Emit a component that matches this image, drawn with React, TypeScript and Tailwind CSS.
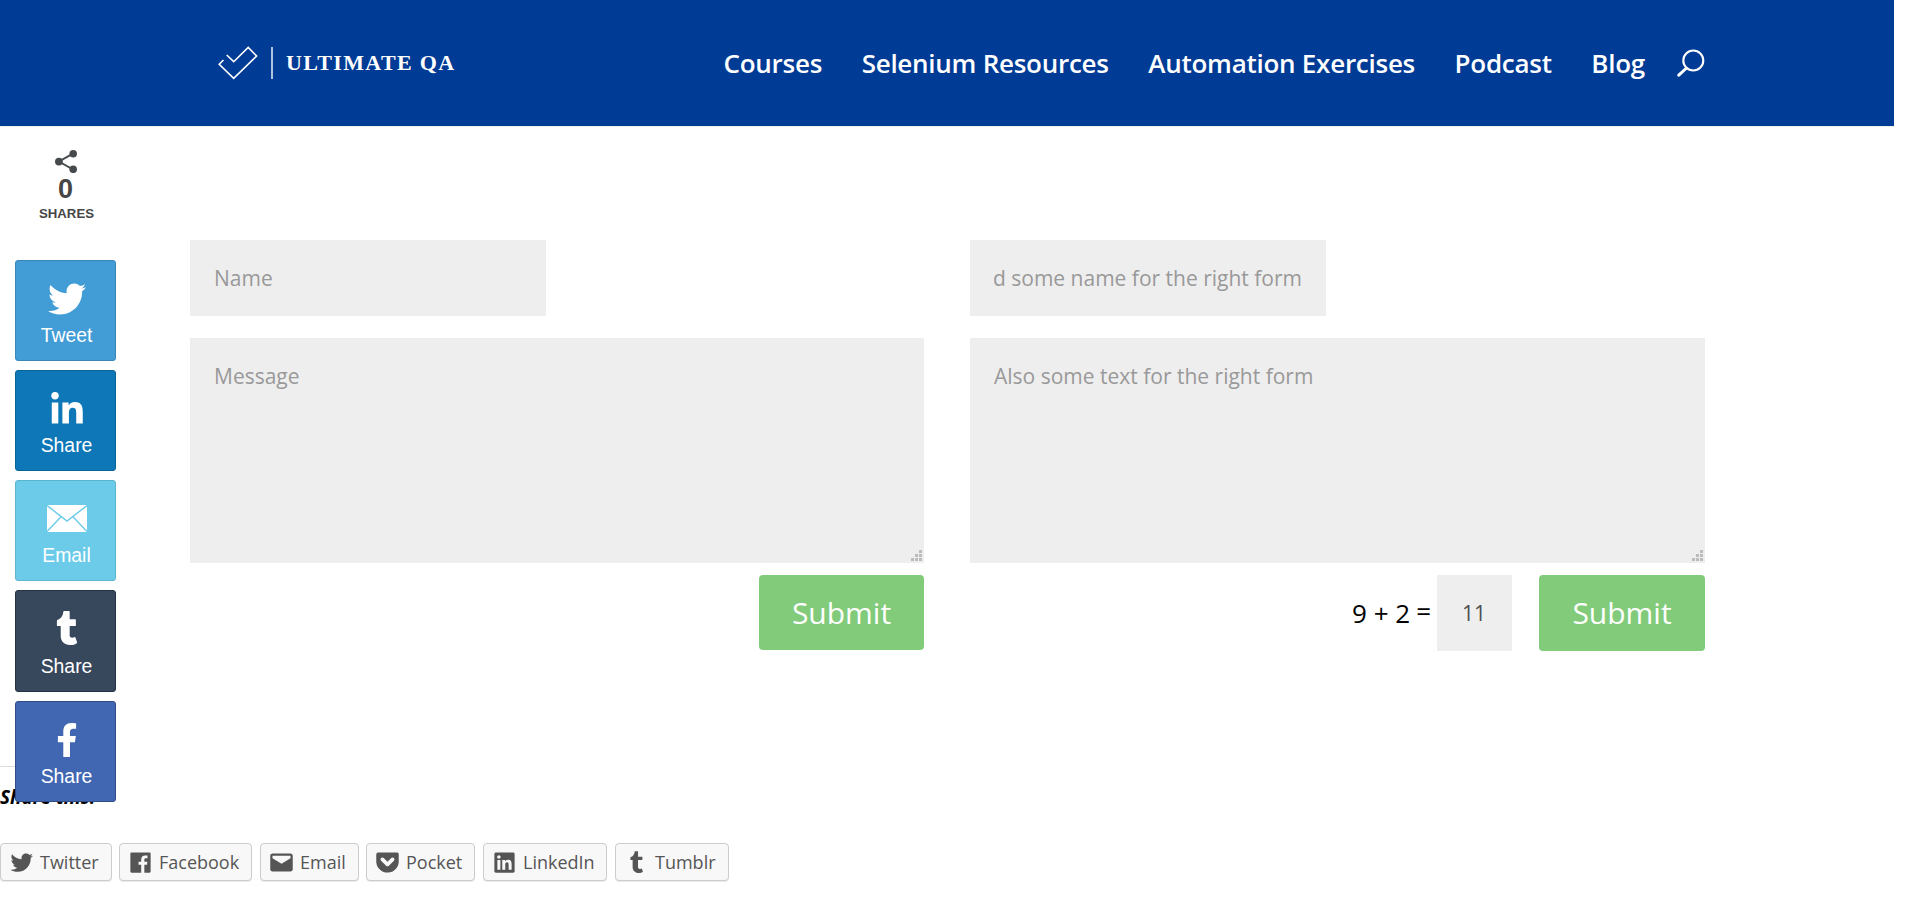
import React from "react";
import { FaTwitter, FaLinkedinIn, FaTumblr, FaFacebookF } from "react-icons/fa";

const navLinks = ["Courses", "Selenium Resources", "Automation Exercises", "Podcast", "Blog"];

const EnvelopeIcon = () => (
  <svg width="40" height="27" viewBox="0 0 40 27" className="block">
    <rect width="40" height="27" fill="#fff" />
    <path d="M0 .5 20 16 40 .5M0 26.5 13.8 12M40 26.5 26.2 12" fill="none" stroke="#6bcbe9" strokeWidth="1.4" />
  </svg>
);

const ShareIcon = () => (
  <svg width="22" height="23" viewBox="0 0 22 23" className="block" fill="#464a4c">
    <path d="M18 3.7 4 11.5 18 19.5" fill="none" stroke="#464a4c" strokeWidth="2" />
    <circle cx="18.2" cy="3.8" r="3.8" />
    <circle cx="3.9" cy="11.6" r="3.9" />
    <circle cx="18.2" cy="19.3" r="3.8" />
  </svg>
);

const tiles = [
  { label: "Tweet", box: "h-[101px] bg-[#429cd6] border-[#3a87b5] pt-[17px]", icon: <FaTwitter size={38} />, text: "mt-[3px]" },
  { label: "Share", box: "h-[101px] bg-[#0d77b7] border-[#0b6594] pt-[18px]", icon: <FaLinkedinIn size={36} />, text: "mt-[2px]" },
  { label: "Email", box: "h-[101px] bg-[#6bcbe9] border-[#5cb4cd] pt-[16px]", icon: <EnvelopeIcon />, text: "mt-[4px]" },
  { label: "Share", box: "h-[102px] bg-[#37475c] border-[#26323f] pt-[16px]", icon: <FaTumblr size={34} />, text: "mt-[5px]" },
  { label: "Share", box: "h-[101px] bg-[#4267b2] border-[#304c85] pt-[17px]", icon: <FaFacebookF size={34} className="ml-px" />, text: "mt-[3px]" },
];

const services = [
  {
    name: "Twitter",
    box: "w-[112px] mr-[7px]",
    d: "M22.23 5.924c-.736.326-1.527.547-2.357.646.847-.508 1.498-1.312 1.804-2.27-.793.47-1.67.812-2.606.996C18.325 4.498 17.258 4 16.078 4c-2.266 0-4.103 1.837-4.103 4.103 0 .322.036.635.106.935-3.41-.17-6.433-1.804-8.457-4.287-.353.607-.556 1.312-.556 2.064 0 1.424.724 2.68 1.825 3.415-.673-.022-1.305-.207-1.86-.514v.052c0 1.988 1.415 3.647 3.293 4.023-.344.095-.707.145-1.08.145-.265 0-.522-.026-.773-.074.522 1.63 2.038 2.817 3.833 2.85-1.404 1.1-3.174 1.757-5.096 1.757-.332 0-.66-.02-.98-.057 1.816 1.164 3.973 1.843 6.29 1.843 7.547 0 11.675-6.252 11.675-11.675 0-.178-.004-.355-.012-.53.802-.578 1.497-1.3 2.047-2.124z",
  },
  {
    name: "Facebook",
    box: "w-[133px] mr-[8px]",
    d: "M20.007 3H3.993C3.445 3 3 3.445 3 3.993v16.013c0 .55.445.994.993.994h8.62v-6.97H10.27V11.31h2.346V9.31c0-2.325 1.42-3.59 3.494-3.59.993 0 1.847.073 2.096.106v2.43h-1.438c-1.128 0-1.346.537-1.346 1.324v1.734h2.69l-.35 2.717h-2.34V21h4.587c.548 0 .993-.445.993-.993V3.993c0-.548-.445-.993-.993-.993z",
  },
  {
    name: "Email",
    box: "w-[99px] mr-[7px]",
    d: "M20 4H4c-1.105 0-2 .895-2 2v12c0 1.105.895 2 2 2h16c1.105 0 2-.895 2-2V6c0-1.105-.895-2-2-2zm0 4.236l-8 4.882-8-4.882V6h16v2.236z",
  },
  {
    name: "Pocket",
    box: "w-[109px] mr-[8px]",
    d: "M21.927 4.194C21.667 3.48 20.982 3 20.222 3h-.01-1.721H3.839C3.092 3 2.411 3.47 2.145 4.17c-.094.247-.142.505-.142.77v6.036l.069 1.2c.29 2.73 1.707 5.115 3.899 6.778.039.03.079.059.119.089l.025.018c1.175.859 2.491 1.441 3.91 1.727.655.132 1.325.2 1.991.2.615 0 1.232-.057 1.839-.17.073-.013.145-.028.219-.044.02-.004.042-.012.064-.023 1.359-.297 2.621-.864 3.753-1.691l.025-.018c.04-.029.08-.058.119-.089 2.192-1.664 3.609-4.049 3.898-6.778l.069-1.2V4.94C22.001 4.687 22.013 4.437 21.927 4.194zM17.704 10.491l-4.485 4.303c-.338.325-.779.487-1.218.487-.438 0-.879-.162-1.217-.487l-4.486-4.303c-.673-.646-.695-1.717-.049-2.392.647-.673 1.717-.695 2.392-.049l3.359 3.223 3.36-3.223c.673-.646 1.745-.624 2.391.049.647.674.625 1.746-.047 2.392z",
  },
  {
    name: "LinkedIn",
    box: "w-[124px] mr-[8px]",
    d: "M19.7 3H4.3C3.582 3 3 3.582 3 4.3v15.4c0 .718.582 1.3 1.3 1.3h15.4c.718 0 1.3-.582 1.3-1.3V4.3c0-.718-.582-1.3-1.3-1.3zM8.34 18.338H5.666v-8.59H8.34v8.59zM7.003 8.574c-.857 0-1.55-.694-1.55-1.548 0-.855.692-1.548 1.55-1.548.854 0 1.547.694 1.547 1.548 0 .855-.692 1.548-1.546 1.548zm11.335 9.764h-2.67V14.16c0-.995-.017-2.277-1.387-2.277-1.39 0-1.6 1.086-1.6 2.206v4.248h-2.668v-8.59h2.56v1.174h.036c.357-.675 1.228-1.387 2.527-1.387 2.703 0 3.203 1.78 3.203 4.092v4.71z",
  },
  {
    name: "Tumblr",
    box: "w-[114px]",
    d: "M16.749 17.396c-.357.17-1.041.319-1.551.332-1.539.041-1.837-1.081-1.85-1.896V9.847h3.861V6.937h-3.847V2.039h-2.817c-.046 0-.127.041-.138.144-.165 1.499-.867 4.13-3.783 5.181v2.484h1.945v6.282c0 2.151 1.587 5.206 5.775 5.135 1.413-.024 2.982-.616 3.329-1.126l-.924-2.743z",
  },
];

function Message({ text }: { text: string }) {
  return (
    <div className="relative mt-[22px] h-[225px] bg-[#eee] px-6 pt-[23px] text-[21px] leading-[30px] text-[#999]">
      {text}
      <svg width="11" height="11" viewBox="0 0 11 11" className="absolute right-[2px] bottom-[2px]" fill="#bcbcbc">
        <path d="M8 0h3v3H8zM4 4h3v3H4zM8 4h3v3H8zM0 8h3v3H0zM4 8h3v3H4zM8 8h3v3H8z" />
      </svg>
    </div>
  );
}

function Submit({ box }: { box: string }) {
  return <button className={`${box} rounded-[4px] bg-[#81cb7b] text-[30px] leading-[40px] text-white`}>Submit</button>;
}

export default function App() {
  return (
    <div className="relative h-[910px] w-full overflow-hidden bg-white font-['Open_Sans',sans-serif] text-black">
      <header className="flex h-[127px] w-[1894px] items-center border-b border-[#eee] bg-[#003b95] pr-[189px] pl-[218px]">
        <div className="flex items-center">
          <svg width="40" height="34" viewBox="0 0 40 34" className="block" fill="none" stroke="#fff" strokeWidth="1.6">
            <path d="M5.5 14 1.2 18.3 15.7 32.4 38.6 10 30.2 1.4 15.7 15.7 8.7 9" />
          </svg>
          <div className="ml-[13px] h-8 w-[2px] bg-[#b0c3e0]" />
          <div className="ml-[13px] font-['Liberation_Serif',serif] text-[22px] leading-none font-bold tracking-[1.35px] whitespace-nowrap text-white">
            ULTIMATE QA
          </div>
        </div>
        <nav className="ml-auto flex items-center gap-[39.6px] text-[26px] leading-[36px] font-semibold tracking-[-0.26px] whitespace-nowrap text-white">
          {navLinks.map((l) => (
            <a key={l}>{l}</a>
          ))}
        </nav>
        <svg width="28" height="28" viewBox="0 0 28 28" className="ml-8 block" fill="none" stroke="#fff">
          <circle cx="16.3" cy="11.5" r="10" strokeWidth="2.1" />
          <path d="M9 19.5 1.8 26.2" strokeWidth="3" strokeLinecap="round" />
        </svg>
      </header>

      <main className="flex gap-[46px] pt-[113px] pl-[190px]">
        <section className="w-[734px]">
          <div className="flex h-[76px] w-[356px] items-center bg-[#eee] px-6 pt-[2px] text-[21px] text-[#999]">Name</div>
          <Message text="Message" />
          <div className="mt-3 flex h-[76px] items-start justify-end">
            <Submit box="h-[75px] w-[165px]" />
          </div>
        </section>
        <section className="w-[735px]">
          <div className="flex h-[76px] w-[356px] items-center bg-[#eee] px-6 pt-[2px] text-[21px] text-[#999]">
            <div className="flex w-full justify-end overflow-hidden whitespace-nowrap">d some name for the right form</div>
          </div>
          <Message text="Also some text for the right form" />
          <div className="mt-3 flex h-[76px] items-center justify-end">
            <span className="text-[26px] leading-[36px]">9 + 2</span>
            <span className="ml-[6px] pb-[5px] text-[26px] leading-[36px]">=</span>
            <div className="ml-[6px] flex h-[76px] w-[75px] items-center bg-[#eee] pt-[2px] pl-[25px] text-[21px] text-[#4e4e4e]">
              11
            </div>
            <div className="ml-[27px] flex">
              <Submit box="h-[76px] w-[166px] pb-px" />
            </div>
          </div>
        </section>
      </main>

      <footer className="pt-[115px]">
        <h3 className="w-[96px] border-t border-[#ddd] pt-[18px] text-[18.9px] leading-6 font-bold whitespace-nowrap italic">
          Share this:
        </h3>
        <ul className="mt-[34px] flex">
          {services.map((s) => (
            <li
              key={s.name}
              className={`${s.box} flex h-[38px] shrink-0 items-center rounded-[4px] border border-[#ccc] bg-[#f8f8f8] pl-[7px] text-[18px] text-[#555] shadow-[0_1px_0_rgba(0,0,0,0.08)]`}
            >
              <svg width="27" height="27" viewBox="0 0 24 24" className="shrink-0" fill="#555">
                <path d={s.d} />
              </svg>
              <span className="ml-[5px]">{s.name}</span>
            </li>
          ))}
        </ul>
      </footer>

      <aside className="absolute top-[150px] left-[15px] w-[101px] font-['Liberation_Sans',sans-serif]">
        <div className="flex h-[110px] flex-col items-center text-[#464646]">
          <ShareIcon />
          <div className="mt-[2px] text-[27px] leading-[28px] font-bold">0</div>
          <div className="mt-[3px] pl-[2px] text-[13.2px] leading-4 font-bold">SHARES</div>
        </div>
        <div className="flex flex-col gap-[9px]">
          {tiles.map((t, i) => (
            <div key={i} className={`${t.box} flex flex-col items-center rounded-[3px] border text-white`}>
              <div className="flex h-[42px] items-center pl-[2px]">{t.icon}</div>
              <div className={`${t.text} pl-[2px] text-[19.4px] leading-6`}>{t.label}</div>
            </div>
          ))}
        </div>
      </aside>
    </div>
  );
}
